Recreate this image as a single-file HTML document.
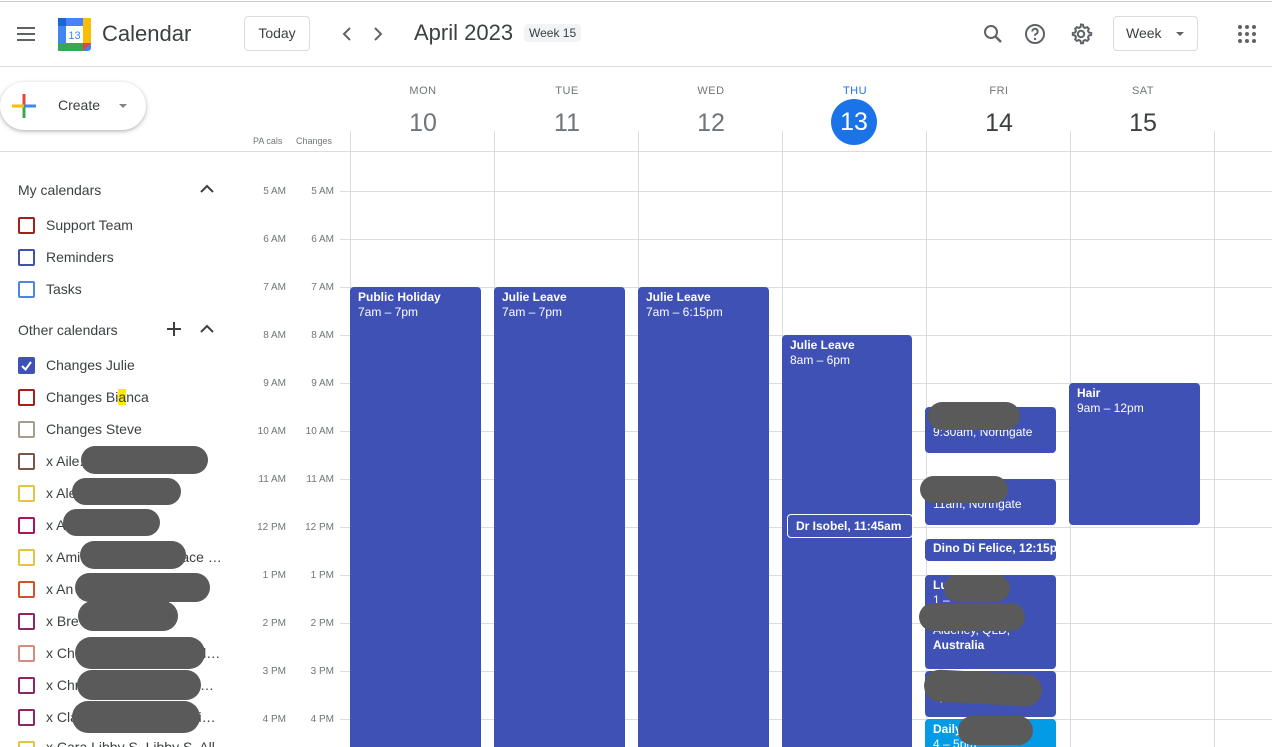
<!DOCTYPE html>
<html><head><meta charset="utf-8"><style>
*{box-sizing:border-box;margin:0;padding:0}
html,body{width:1272px;height:747px;overflow:hidden}
body{background:#fff;font-family:"Liberation Sans",Arial,sans-serif;color:#3c4043;position:relative}
.a{position:absolute}
.hl{position:absolute;left:340px;width:932px;height:1px;background:#dadce0}
.vl{position:absolute;top:131px;width:1px;height:616px;background:#dadce0}
.tl{position:absolute;font-size:10px;color:#70757a;text-align:right;width:40px}
.ev{position:absolute;background:#3f51b5;color:#fff;border-radius:4px;font-size:12px;line-height:15px;padding:3px 8px;overflow:hidden;white-space:nowrap}
.ev b{display:block}
.dn{position:absolute;width:144px;text-align:center;font-size:11px;color:#70757a;top:85px;letter-spacing:.5px}
.dd{position:absolute;width:144px;text-align:center;font-size:25px;color:#70757a;top:109px}
.cb{position:absolute;left:18px;width:17px;height:17px;border:2px solid;border-radius:2px}
.cl{position:absolute;left:46px;font-size:14px;color:#3c4043}
.bl{position:absolute;background:#5a5a5a;border-radius:16px}
.sh{position:absolute;left:18px;font-size:14px;color:#3c4043;font-weight:500}
</style></head><body>
<div class="a" style="left:0;top:1px;width:1272px;height:1px;background:#ccc"></div>
<div class="a" style="left:0;top:66px;width:1272px;height:1px;background:#dadce0"></div>
<div class="a" style="left:17px;top:27px;width:18px;height:2px;background:#5f6368;box-shadow:0 6px 0 #5f6368,0 12px 0 #5f6368"></div>
<svg class="a" style="left:58px;top:18px" width="33" height="33" viewBox="0 0 33 33">
<rect x="0" y="0" width="33" height="33" rx="3" fill="#4285f4"/>
<rect x="25" y="0" width="8" height="25" fill="#fbbc04"/>
<rect x="0" y="25" width="25" height="8" fill="#34a853"/>
<polygon points="25,25 33,25 25,33" fill="#ea4335"/>
<rect x="0" y="0" width="8" height="8" fill="#1967d2"/>
<rect x="8" y="8" width="17" height="17" fill="#fff"/>
<text x="16.5" y="21" font-size="11" text-anchor="middle" fill="#4285f4" font-family="Liberation Sans">13</text>
</svg>
<div class="a" style="left:102px;top:21px;font-size:22px;color:#3c4043">Calendar</div>
<div class="a" style="left:244px;top:16px;width:66px;height:35px;border:1px solid #dadce0;border-radius:4px;font-size:14px;text-align:center;line-height:33px">Today</div>
<svg class="a" style="left:336px;top:24px" width="52" height="20"><path d="M14 4l-6 6 6 6" stroke="#5f6368" stroke-width="2" fill="none"/><path d="M39 4l6 6-6 6" stroke="#5f6368" stroke-width="2" fill="none"/></svg>
<div class="a" style="left:414px;top:20px;font-size:22px;color:#3c4043">April 2023</div>
<div class="a" style="left:524px;top:24px;padding:2px 5px;background:#f1f3f4;font-size:12px;border-radius:4px;color:#3c4043">Week 15</div>
<svg class="a" style="left:981px;top:22px" width="24" height="24" viewBox="0 0 24 24"><circle cx="10" cy="10" r="6" stroke="#5f6368" stroke-width="2" fill="none"/><path d="M14.5 14.5L20 20" stroke="#5f6368" stroke-width="2.5"/></svg>
<svg class="a" style="left:1023px;top:22px" width="24" height="24" viewBox="0 0 24 24"><circle cx="12" cy="12" r="9" stroke="#5f6368" stroke-width="2" fill="none"/><path d="M9.3 9.5a2.7 2.7 0 1 1 3.7 2.5c-.8.4-1 1-1 1.8" stroke="#5f6368" stroke-width="2" fill="none"/><circle cx="12" cy="17" r="1.2" fill="#5f6368"/></svg>
<svg class="a" style="left:1069px;top:22px" width="24" height="24" viewBox="0 0 24 24"><path d="M12 2.5l2 .3.5 2.3 1.6.9 2.2-.8 1.5 1.5-.8 2.2.9 1.6 2.3.5v2l-2.3.5-.9 1.6.8 2.2-1.5 1.5-2.2-.8-1.6.9-.5 2.3h-2l-.5-2.3-1.6-.9-2.2.8-1.5-1.5.8-2.2-.9-1.6-2.3-.5v-2l2.3-.5.9-1.6-.8-2.2 1.5-1.5 2.2.8 1.6-.9.5-2.3z" stroke="#5f6368" stroke-width="2" fill="none"/><circle cx="12" cy="12" r="3.2" stroke="#5f6368" stroke-width="2" fill="none"/></svg>
<div class="a" style="left:1113px;top:16px;width:85px;height:35px;border:1px solid #dadce0;border-radius:4px;font-size:14px;line-height:33px;padding-left:12px">Week</div>
<div class="a" style="left:1176px;top:32px;border-left:4px solid transparent;border-right:4px solid transparent;border-top:4px solid #5f6368"></div>
<svg class="a" style="left:1238px;top:25px" width="18" height="18"><g fill="#5f6368"><circle cx="2" cy="2" r="2"/><circle cx="9" cy="2" r="2"/><circle cx="16" cy="2" r="2"/><circle cx="2" cy="9" r="2"/><circle cx="9" cy="9" r="2"/><circle cx="16" cy="9" r="2"/><circle cx="2" cy="16" r="2"/><circle cx="9" cy="16" r="2"/><circle cx="16" cy="16" r="2"/></g></svg>
<div class="a" style="left:0;top:82px;width:146px;height:48px;border-radius:24px;background:#fff;box-shadow:0 1px 3px rgba(60,64,67,.3),0 2px 6px rgba(60,64,67,.15)"></div>
<svg class="a" style="left:12px;top:94px" width="24" height="24"><rect x="10.5" y="0" width="3" height="12" fill="#ea4335"/><rect x="12" y="10.5" width="12" height="3" fill="#4285f4"/><rect x="10.5" y="12" width="3" height="12" fill="#34a853"/><rect x="0" y="10.5" width="12" height="3" fill="#fbbc04"/></svg>
<div class="a" style="left:58px;top:97px;font-size:14px;color:#3c4043">Create</div>
<div class="a" style="left:119px;top:104px;border-left:4px solid transparent;border-right:4px solid transparent;border-top:4px solid #80868b"></div>
<div class="a" style="left:253px;top:136px;font-size:9px;color:#70757a">PA cals</div>
<div class="a" style="left:296px;top:136px;font-size:9px;color:#70757a">Changes</div>
<div class="a" style="left:0;top:151px;width:1272px;height:1px;background:#dadce0"></div>
<div class="dn" style="left:351px">MON</div><div class="dd" style="left:351px">10</div>
<div class="dn" style="left:495px">TUE</div><div class="dd" style="left:495px">11</div>
<div class="dn" style="left:639px">WED</div><div class="dd" style="left:639px">12</div>
<div class="dn" style="left:783px;color:#1a73e8">THU</div>
<div class="a" style="left:831px;top:99px;width:46px;height:46px;border-radius:50%;background:#1a73e8;color:#fff;font-size:25px;text-align:center;line-height:46px">13</div>
<div class="dn" style="left:927px">FRI</div><div class="dd" style="left:927px;color:#3c4043">14</div>
<div class="dn" style="left:1071px">SAT</div><div class="dd" style="left:1071px;color:#3c4043">15</div>
<div class="vl" style="left:350px"></div><div class="vl" style="left:494px"></div><div class="vl" style="left:638px"></div><div class="vl" style="left:782px"></div><div class="vl" style="left:926px"></div><div class="vl" style="left:1070px"></div><div class="vl" style="left:1214px"></div>
<div class="hl" style="top:191px"></div><div class="hl" style="top:239px"></div><div class="hl" style="top:287px"></div><div class="hl" style="top:335px"></div><div class="hl" style="top:383px"></div><div class="hl" style="top:431px"></div><div class="hl" style="top:479px"></div><div class="hl" style="top:527px"></div><div class="hl" style="top:575px"></div><div class="hl" style="top:623px"></div><div class="hl" style="top:671px"></div><div class="hl" style="top:719px"></div>
<div class="tl" style="left:246px;top:186px">5 AM</div><div class="tl" style="left:294px;top:186px">5 AM</div>
<div class="tl" style="left:246px;top:234px">6 AM</div><div class="tl" style="left:294px;top:234px">6 AM</div>
<div class="tl" style="left:246px;top:282px">7 AM</div><div class="tl" style="left:294px;top:282px">7 AM</div>
<div class="tl" style="left:246px;top:330px">8 AM</div><div class="tl" style="left:294px;top:330px">8 AM</div>
<div class="tl" style="left:246px;top:378px">9 AM</div><div class="tl" style="left:294px;top:378px">9 AM</div>
<div class="tl" style="left:246px;top:426px">10 AM</div><div class="tl" style="left:294px;top:426px">10 AM</div>
<div class="tl" style="left:246px;top:474px">11 AM</div><div class="tl" style="left:294px;top:474px">11 AM</div>
<div class="tl" style="left:246px;top:522px">12 PM</div><div class="tl" style="left:294px;top:522px">12 PM</div>
<div class="tl" style="left:246px;top:570px">1 PM</div><div class="tl" style="left:294px;top:570px">1 PM</div>
<div class="tl" style="left:246px;top:618px">2 PM</div><div class="tl" style="left:294px;top:618px">2 PM</div>
<div class="tl" style="left:246px;top:666px">3 PM</div><div class="tl" style="left:294px;top:666px">3 PM</div>
<div class="tl" style="left:246px;top:714px">4 PM</div><div class="tl" style="left:294px;top:714px">4 PM</div>
<div class="ev" style="left:350px;top:287px;width:131px;height:470px"><b>Public Holiday</b>7am – 7pm</div>
<div class="ev" style="left:494px;top:287px;width:131px;height:470px"><b>Julie Leave</b>7am – 7pm</div>
<div class="ev" style="left:638px;top:287px;width:131px;height:470px"><b>Julie Leave</b>7am – 6:15pm</div>
<div class="ev" style="left:782px;top:335px;width:130px;height:420px"><b>Julie Leave</b>8am – 6pm</div>
<div class="ev" style="left:787px;top:514px;width:126px;height:24px;border:1px solid #fff;font-weight:bold;padding:3px 8px;line-height:16px">Dr Isobel, 11:45am</div>
<div class="ev" style="left:925px;top:407px;width:131px;height:46px"><b>&nbsp;</b>9:30am, Northgate</div>
<div class="ev" style="left:925px;top:479px;width:131px;height:46px"><b>&nbsp;</b>11am, Northgate</div>
<div class="ev" style="left:925px;top:539px;width:131px;height:22px;font-weight:bold;padding:2px 8px">Dino Di Felice, 12:15pm</div>
<div class="ev" style="left:925px;top:575px;width:131px;height:94px"><b>Lu</b>1 –<br><b>&nbsp;</b>Alderley, QLD,<br><b>Australia</b></div>
<div class="ev" style="left:925px;top:671px;width:131px;height:46px"><b>&nbsp;</b>3pm, Terra</div>
<div class="ev" style="left:925px;top:719px;width:131px;height:40px;background:#039be5"><b>Daily</b>4 – 5pm</div>
<div class="ev" style="left:1069px;top:383px;width:131px;height:142px"><b>Hair</b>9am – 12pm</div>
<div class="bl" style="left:928px;top:402px;width:92px;height:28px"></div>
<div class="bl" style="left:920px;top:476px;width:88px;height:27px"></div>
<div class="bl" style="left:944px;top:575px;width:66px;height:27px"></div>
<div class="bl" style="left:919px;top:603px;width:106px;height:28px"></div>
<div class="bl" style="left:924px;top:672px;width:118px;height:32px;transform:rotate(3deg)"></div>
<div class="bl" style="left:958px;top:716px;width:75px;height:29px"></div>
<div class="sh" style="top:182px">My calendars</div>
<svg class="a" style="left:199px;top:183px" width="16" height="12"><path d="M2 9l6-6 6 6" stroke="#3c4043" stroke-width="2" fill="none"/></svg>
<div class="cb" style="top:217px;border-color:#a51d1d"></div><div class="cl" style="top:217px">Support Team</div>
<div class="cb" style="top:249px;border-color:#3f51b5"></div><div class="cl" style="top:249px">Reminders</div>
<div class="cb" style="top:281px;border-color:#4a86e8"></div><div class="cl" style="top:281px">Tasks</div>
<div class="sh" style="top:322px">Other calendars</div>
<svg class="a" style="left:165px;top:320px" width="18" height="18"><path d="M9 2v14M2 9h14" stroke="#3c4043" stroke-width="2"/></svg>
<svg class="a" style="left:199px;top:323px" width="16" height="12"><path d="M2 9l6-6 6 6" stroke="#3c4043" stroke-width="2" fill="none"/></svg>
<div class="cb" style="top:357px;border-color:#3f51b5;background:#3f51b5"></div>
<svg class="a" style="left:20px;top:360px" width="13" height="12"><path d="M2 6l3.5 3.5L11 2" stroke="#fff" stroke-width="2" fill="none"/></svg>
<div class="cl" style="top:357px">Changes Julie</div>
<div class="cb" style="top:389px;border-color:#a51d1d"></div><div class="cl" style="top:389px">Changes Bi<span style="background:#ffeb00">a</span>nca</div>
<div class="cb" style="top:421px;border-color:#a79b8e"></div><div class="cl" style="top:421px">Changes Steve</div>
<div class="cb" style="top:453px;border-color:#795548"></div><div class="cl" style="top:453px">x Aile...........................…</div>
<div class="cb" style="top:485px;border-color:#e4c441"></div><div class="cl" style="top:485px">x Ale</div>
<div class="cb" style="top:517px;border-color:#ad1457"></div><div class="cl" style="top:517px">x A</div>
<div class="cb" style="top:549px;border-color:#e4c441"></div><div class="cl" style="top:549px">x Ami&nbsp;&nbsp;&nbsp;&nbsp;&nbsp;&nbsp;&nbsp;&nbsp;&nbsp;&nbsp;&nbsp;&nbsp;&nbsp;&nbsp;&nbsp;&nbsp;&nbsp;&nbsp;&nbsp;&nbsp;&nbsp;&nbsp;&nbsp;&nbsp;&nbsp;&nbsp;ace …</div>
<div class="cb" style="top:581px;border-color:#d2532a"></div><div class="cl" style="top:581px">x An&nbsp;&nbsp;&nbsp;&nbsp;&nbsp;&nbsp;&nbsp;&nbsp;&nbsp;&nbsp;&nbsp;&nbsp;&nbsp;&nbsp;&nbsp;&nbsp;&nbsp;&nbsp;&nbsp;&nbsp;&nbsp;&nbsp;&nbsp;&nbsp;&nbsp;&nbsp;&nbsp;&nbsp;&nbsp;&nbsp;&nbsp;y</div>
<div class="cb" style="top:613px;border-color:#8e2461"></div><div class="cl" style="top:613px">x Bre</div>
<div class="cb" style="top:645px;border-color:#d98a80"></div><div class="cl" style="top:645px">x Ch&nbsp;&nbsp;&nbsp;&nbsp;&nbsp;&nbsp;&nbsp;&nbsp;&nbsp;&nbsp;&nbsp;&nbsp;&nbsp;&nbsp;&nbsp;&nbsp;&nbsp;&nbsp;&nbsp;&nbsp;&nbsp;&nbsp;&nbsp;&nbsp;&nbsp;&nbsp;&nbsp;&nbsp;&nbsp;&nbsp;&nbsp;el…</div>
<div class="cb" style="top:677px;border-color:#8e2461"></div><div class="cl" style="top:677px">x Chr&nbsp;&nbsp;&nbsp;&nbsp;&nbsp;&nbsp;&nbsp;&nbsp;&nbsp;&nbsp;&nbsp;&nbsp;&nbsp;&nbsp;&nbsp;&nbsp;&nbsp;&nbsp;&nbsp;&nbsp;&nbsp;&nbsp;&nbsp;&nbsp;&nbsp;&nbsp;&nbsp;&nbsp;&nbsp;g…</div>
<div class="cb" style="top:709px;border-color:#8e2461"></div><div class="cl" style="top:709px">x Cla&nbsp;&nbsp;&nbsp;&nbsp;&nbsp;&nbsp;&nbsp;&nbsp;&nbsp;&nbsp;&nbsp;&nbsp;&nbsp;&nbsp;&nbsp;&nbsp;&nbsp;&nbsp;&nbsp;&nbsp;&nbsp;&nbsp;&nbsp;&nbsp;&nbsp;&nbsp;&nbsp;&nbsp;&nbsp;ni…</div>
<div class="cb" style="top:741px;border-color:#e4c441"></div><div class="cl" style="top:739px">x Cara Libby S, Libby S, All</div>
<div class="bl" style="left:81px;top:446px;width:127px;height:28px"></div>
<div class="bl" style="left:72px;top:478px;width:109px;height:27px"></div>
<div class="bl" style="left:63px;top:509px;width:97px;height:27px"></div>
<div class="bl" style="left:80px;top:541px;width:106px;height:28px"></div>
<div class="bl" style="left:75px;top:573px;width:135px;height:29px"></div>
<div class="bl" style="left:78px;top:601px;width:100px;height:30px"></div>
<div class="bl" style="left:75px;top:637px;width:130px;height:32px"></div>
<div class="bl" style="left:77px;top:670px;width:124px;height:30px"></div>
<div class="bl" style="left:72px;top:701px;width:128px;height:32px"></div>
</body></html>
